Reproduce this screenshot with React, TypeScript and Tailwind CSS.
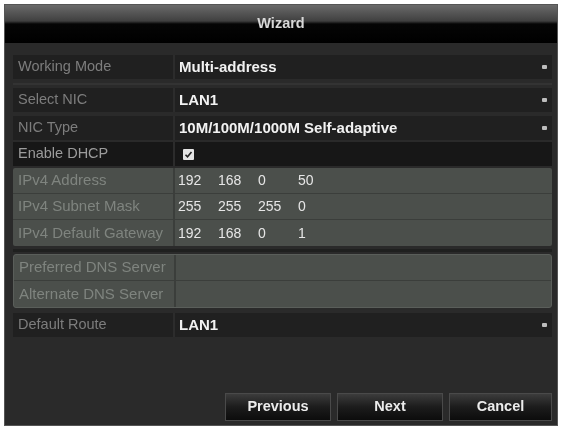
import React from 'react';

const font = { fontFamily: '"Liberation Sans", Arial, sans-serif' };

function Arrow() {
  return <span className="ml-auto mr-[5px] h-[4px] w-[5px] rounded-[1px] bg-[#bdbdbd]" />;
}

interface RowProps {
  label: string;
  children?: React.ReactNode;
  select?: boolean;
  dark?: boolean;
}

function SelectRow({ label, children, select, dark }: RowProps) {
  const cell = dark ? 'bg-[#171717]' : 'bg-[#202020]';
  return (
    <div className="flex h-[24px]">
      <div className={`flex w-[160px] items-center whitespace-nowrap pl-[5px] text-[14.5px] ${dark ? 'text-[#9c9c9c]' : 'text-[#7d7d7d]'} ${cell}`}>
        {label}
      </div>
      <div className="w-[2px] bg-[#2c2c2c]" />
      <div className={`flex flex-1 items-center whitespace-nowrap pl-[4px] text-[15px] font-bold text-[#f2f2f2] ${cell}`}>
        {children}
        {select && <Arrow />}
      </div>
    </div>
  );
}

function GrayRow({ label, values, last }: { label: string; values?: string[]; last?: boolean }) {
  return (
    <div className={`flex h-[26px] ${last ? '' : 'border-b border-[#3b3e3b]'}`}>
      <div className="flex w-[160px] items-center whitespace-nowrap pl-[5px] text-[15px] text-[#7f847f]">{label}</div>
      <div className="w-[2px] bg-[#3b3e3b]" />
      <div className="flex flex-1 items-center pl-[3px] text-[14px] text-[#e6e6e6]">
        {values?.map((v, i) => (
          <span key={i} className="w-[40px]">{v}</span>
        ))}
      </div>
    </div>
  );
}

function Button({ label, w }: { label: string; w: string }) {
  return (
    <button
      className={`${w} h-[28px] border border-[#4a4a4a] bg-gradient-to-b from-[#3c3c3c] via-[#1c1c1c] to-[#0c0c0c] text-[14.5px] font-bold text-[#ececec]`}
    >
      {label}
    </button>
  );
}

export default function App() {
  return (
    <div className="h-[429px] w-[562px] bg-white pb-[3px] pl-[4px] pr-[4px] pt-[4px]" style={font}>
      <div className="flex h-full flex-col border border-[#555] bg-[#2a2a2a] blur-[0.35px]">
        <div className="flex h-[38px] items-center justify-center bg-[linear-gradient(to_bottom,#6a6a6a_0%,#404040_42%,#050505_50%,#000_100%)] text-[14.5px] font-bold text-[#d8d8d8]">
          Wizard
        </div>

        <div className="flex flex-1 flex-col pl-[8px] pr-[5px] pt-[12px]">
          <SelectRow label="Working Mode" select>Multi-address</SelectRow>

          <div className="flex h-[9px] items-center">
            <div className="h-[2px] w-full bg-[#333333]" />
          </div>

          <div className="flex flex-col gap-[4px]">
            <SelectRow label="Select NIC" select>LAN1</SelectRow>
            <SelectRow label="NIC Type" select>10M/100M/1000M Self-adaptive</SelectRow>
          </div>

          <div className="mt-[2px]">
            <SelectRow label="Enable DHCP" dark>
              <span className="ml-[4px] flex h-[11px] w-[11px] items-center justify-center rounded-[1px] bg-[#e4e4e4]">
                <svg width="9" height="9" viewBox="0 0 9 9">
                  <path d="M1.5 4.8 L3.5 6.8 L7.5 2" stroke="#222" strokeWidth="1.6" fill="none" />
                </svg>
              </span>
            </SelectRow>
          </div>

          <div className="mt-[2px] rounded-[2px] bg-[#4b4f4b]">
            <GrayRow label="IPv4 Address" values={['192', '168', '0', '50']} />
            <GrayRow label="IPv4 Subnet Mask" values={['255', '255', '255', '0']} />
            <GrayRow label="IPv4 Default Gateway" values={['192', '168', '0', '1']} last />
          </div>

          <div className="flex h-[8px] items-center">
            <div className="h-[3px] w-full bg-[#1f201f]" />
          </div>

          <div className="rounded-[3px] border border-[#5a5e5a] bg-[#4b4f4b]">
            <GrayRow label="Preferred DNS Server" />
            <GrayRow label="Alternate DNS Server" last />
          </div>

          <div className="mt-[5px]">
            <SelectRow label="Default Route" select>LAN1</SelectRow>
          </div>

          <div className="mt-auto mb-[4px] flex justify-end gap-[6px]">
            <Button label="Previous" w="w-[106px]" />
            <Button label="Next" w="w-[106px]" />
            <Button label="Cancel" w="w-[103px]" />
          </div>
        </div>
      </div>
    </div>
  );
}
